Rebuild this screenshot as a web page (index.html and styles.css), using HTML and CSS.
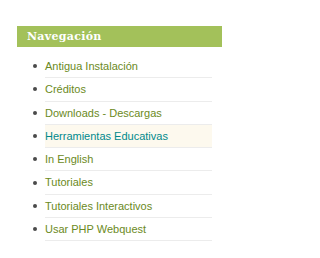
FILE: index.html
```html
<!DOCTYPE html>
<html>
<head>
<meta charset="utf-8">
<link rel="stylesheet" href="styles.css">
</head>
<body>
<div class="block">
  <h2 class="block-title">Navegación</h2>
  <ul class="menu">
    <li><a href="#">Antigua Instalación</a></li>
    <li><a href="#">Créditos</a></li>
    <li><a href="#">Downloads - Descargas</a></li>
    <li class="active"><a href="#">Herramientas Educativas</a></li>
    <li><a href="#">In English</a></li>
    <li><a href="#">Tutoriales</a></li>
    <li><a href="#">Tutoriales Interactivos</a></li>
    <li><a href="#">Usar PHP Webquest</a></li>
  </ul>
</div>
</body>
</html>
```

FILE: styles.css
```css
html, body {
  margin: 0;
  padding: 0;
  background: #ffffff;
}
.block {
  margin: 26px 0 0 17px;
  width: 205px;
}
.block-title {
  margin: 0;
  height: 21px;
  line-height: 21px;
  padding-left: 10px;
  background: #a3c15a;
  color: #ffffff;
  font-family: "DejaVu Serif", serif;
  font-weight: bold;
  font-size: 11px;
  letter-spacing: 0.3px;
}
.menu {
  list-style: none;
  margin: 8px 0 0 0;
  padding: 0 10px 0 16px;
  font-family: "Liberation Sans", Arial, sans-serif;
  font-size: 11px;
}
.menu li {
  display: flex;
  align-items: center;
}
.menu li::before {
  content: "";
  flex: none;
  width: 4px;
  height: 4px;
  border-radius: 50%;
  background: #4a4a4a;
  margin-right: 8px;
  margin-bottom: 1px;
}
.menu li a {
  flex: 1;
  display: block;
  height: 22.3px;
  line-height: 22.3px;
  border-bottom: 1px solid #ececec;
  color: #6b8a23;
  text-decoration: none;
}
.menu li.active a {
  background: #fdf9ee;
  color: #00898c;
}
```
